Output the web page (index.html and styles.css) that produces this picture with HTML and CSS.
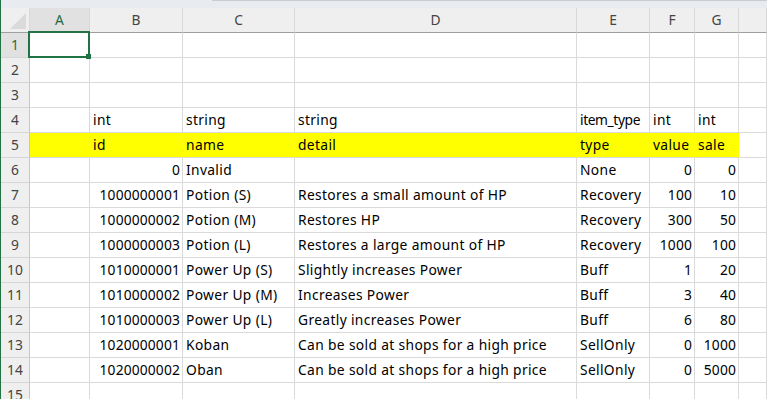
FILE: index.html
```html
<!DOCTYPE html>
<html lang="en">
<head>
    <meta charset="UTF-8">
    <meta name="viewport" content="width=device-width, initial-scale=1.0">
    <title>Item Master</title>
    <link rel="stylesheet" href="styles.css">
</head>
<body>
    <div class="app">
        <!-- Formula bar edge -->
        <div class="topbar"><div class="topbar-edge"></div></div>

        <!-- Sheet -->
        <div class="sheet">
            <div class="row head">
                <div class="cell corner"><span class="corner-mark"></span></div>
                <div class="cell active">A</div>
                <div class="cell">B</div>
                <div class="cell">C</div>
                <div class="cell">D</div>
                <div class="cell">E</div>
                <div class="cell">F</div>
                <div class="cell">G</div>
                <div class="cell"></div>
            </div>

            <div class="row">
                <div class="cell rh active">1</div>
                <div class="cell selected"><span class="sel"><span class="fill-handle"></span></span></div>
                <div class="cell"></div><div class="cell"></div><div class="cell"></div>
                <div class="cell"></div><div class="cell"></div><div class="cell"></div><div class="cell"></div>
            </div>
            <div class="row">
                <div class="cell rh">2</div>
                <div class="cell"></div><div class="cell"></div><div class="cell"></div><div class="cell"></div>
                <div class="cell"></div><div class="cell"></div><div class="cell"></div><div class="cell"></div>
            </div>
            <div class="row">
                <div class="cell rh">3</div>
                <div class="cell"></div><div class="cell"></div><div class="cell"></div><div class="cell"></div>
                <div class="cell"></div><div class="cell"></div><div class="cell"></div><div class="cell"></div>
            </div>
            <div class="row">
                <div class="cell rh">4</div>
                <div class="cell"></div>
                <div class="cell">int</div>
                <div class="cell">string</div>
                <div class="cell">string</div>
                <div class="cell tight">item_type</div>
                <div class="cell">int</div>
                <div class="cell">int</div>
                <div class="cell"></div>
            </div>
            <div class="row">
                <div class="cell rh">5</div>
                <div class="cell hl"></div>
                <div class="cell hl">id</div>
                <div class="cell hl">name</div>
                <div class="cell hl">detail</div>
                <div class="cell hl">type</div>
                <div class="cell hl">value</div>
                <div class="cell hl">sale</div>
                <div class="cell"></div>
            </div>
            <div class="row">
                <div class="cell rh">6</div>
                <div class="cell"></div>
                <div class="cell num">0</div>
                <div class="cell">Invalid</div>
                <div class="cell"></div>
                <div class="cell">None</div>
                <div class="cell num">0</div>
                <div class="cell num">0</div>
                <div class="cell"></div>
            </div>
            <div class="row">
                <div class="cell rh">7</div>
                <div class="cell"></div>
                <div class="cell num">1000000001</div>
                <div class="cell">Potion (S)</div>
                <div class="cell">Restores a small amount of HP</div>
                <div class="cell">Recovery</div>
                <div class="cell num">100</div>
                <div class="cell num">10</div>
                <div class="cell"></div>
            </div>
            <div class="row">
                <div class="cell rh">8</div>
                <div class="cell"></div>
                <div class="cell num">1000000002</div>
                <div class="cell">Potion (M)</div>
                <div class="cell">Restores HP</div>
                <div class="cell">Recovery</div>
                <div class="cell num">300</div>
                <div class="cell num">50</div>
                <div class="cell"></div>
            </div>
            <div class="row">
                <div class="cell rh">9</div>
                <div class="cell"></div>
                <div class="cell num">1000000003</div>
                <div class="cell">Potion (L)</div>
                <div class="cell">Restores a large amount of HP</div>
                <div class="cell">Recovery</div>
                <div class="cell num">1000</div>
                <div class="cell num">100</div>
                <div class="cell"></div>
            </div>
            <div class="row">
                <div class="cell rh">10</div>
                <div class="cell"></div>
                <div class="cell num">1010000001</div>
                <div class="cell">Power Up (S)</div>
                <div class="cell">Slightly increases Power</div>
                <div class="cell">Buff</div>
                <div class="cell num">1</div>
                <div class="cell num">20</div>
                <div class="cell"></div>
            </div>
            <div class="row">
                <div class="cell rh">11</div>
                <div class="cell"></div>
                <div class="cell num">1010000002</div>
                <div class="cell">Power Up (M)</div>
                <div class="cell">Increases Power</div>
                <div class="cell">Buff</div>
                <div class="cell num">3</div>
                <div class="cell num">40</div>
                <div class="cell"></div>
            </div>
            <div class="row">
                <div class="cell rh">12</div>
                <div class="cell"></div>
                <div class="cell num">1010000003</div>
                <div class="cell">Power Up (L)</div>
                <div class="cell">Greatly increases Power</div>
                <div class="cell">Buff</div>
                <div class="cell num">6</div>
                <div class="cell num">80</div>
                <div class="cell"></div>
            </div>
            <div class="row">
                <div class="cell rh">13</div>
                <div class="cell"></div>
                <div class="cell num">1020000001</div>
                <div class="cell">Koban</div>
                <div class="cell">Can be sold at shops for a high price</div>
                <div class="cell">SellOnly</div>
                <div class="cell num">0</div>
                <div class="cell num">1000</div>
                <div class="cell"></div>
            </div>
            <div class="row">
                <div class="cell rh">14</div>
                <div class="cell"></div>
                <div class="cell num">1020000002</div>
                <div class="cell">Oban</div>
                <div class="cell">Can be sold at shops for a high price</div>
                <div class="cell">SellOnly</div>
                <div class="cell num">0</div>
                <div class="cell num">5000</div>
                <div class="cell"></div>
            </div>
            <div class="row">
                <div class="cell rh">15</div>
                <div class="cell"></div><div class="cell"></div><div class="cell"></div><div class="cell"></div>
                <div class="cell"></div><div class="cell"></div><div class="cell"></div><div class="cell"></div>
            </div>
        </div>
    </div>
</body>
</html>
```

FILE: styles.css
```css
body {
    margin: 0;
    font-family: "Noto Sans", sans-serif;
    font-size: 13.8px;
    color: #000;
    background-color: #fff;
    overflow: hidden;
}
.app {
    height: 399px;
    border-left: 1px solid #217346;
    overflow: hidden;
}
.topbar {
    height: 8px;
    background-color: #e8ebef;
}
.topbar-edge {
    margin-left: 211px;
    border-top: 1px solid #c9ccd1;
}
.row {
    display: grid;
    grid-template-columns: 29px 60px 93px 112px 282px 73px 45px 44px 1fr;
    height: 25px;
}
.cell {
    box-sizing: border-box;
    border-right: 1px solid #dadada;
    border-bottom: 1px solid #dadada;
    padding: 0 3px;
    line-height: 24px;
    letter-spacing: 0.35px;
    white-space: nowrap;
    overflow: hidden;
}
.tight {
    letter-spacing: -0.4px;
}
.num {
    text-align: right;
    padding-right: 2px;
    letter-spacing: 0.15px;
}
.hl {
    background-color: #ffff00;
    border-right-color: #ffff00;
}

/* column and row headers */
.head .cell {
    background-color: #efefef;
    border-bottom-color: #9f9f9f;
    border-right-color: #d8d8d8;
    text-align: center;
    color: #444;
    letter-spacing: 0;
}
.rh {
    background-color: #efefef;
    border-right-color: #c6c6c6;
    border-bottom-color: #d6d6d6;
    text-align: center;
    color: #444;
    padding: 0;
    letter-spacing: 0;
}
.head .active, .rh.active {
    background-color: #e1e1e1;
    color: #1f6b40;
}
.corner {
    display: flex;
    justify-content: flex-end;
    align-items: flex-end;
    padding: 0 3px 3px 0;
}
.corner-mark {
    width: 16px;
    height: 16px;
    background-color: #dadada;
    clip-path: polygon(100% 0, 100% 100%, 0 100%);
}

/* active cell */
.selected {
    position: relative;
    overflow: visible;
}
.sel {
    position: absolute;
    top: -2px;
    left: -2px;
    right: -1px;
    bottom: -1px;
    border: 2px solid #217346;
}
.fill-handle {
    position: absolute;
    right: -3px;
    bottom: -3px;
    width: 5px;
    height: 5px;
    background-color: #217346;
}
```
